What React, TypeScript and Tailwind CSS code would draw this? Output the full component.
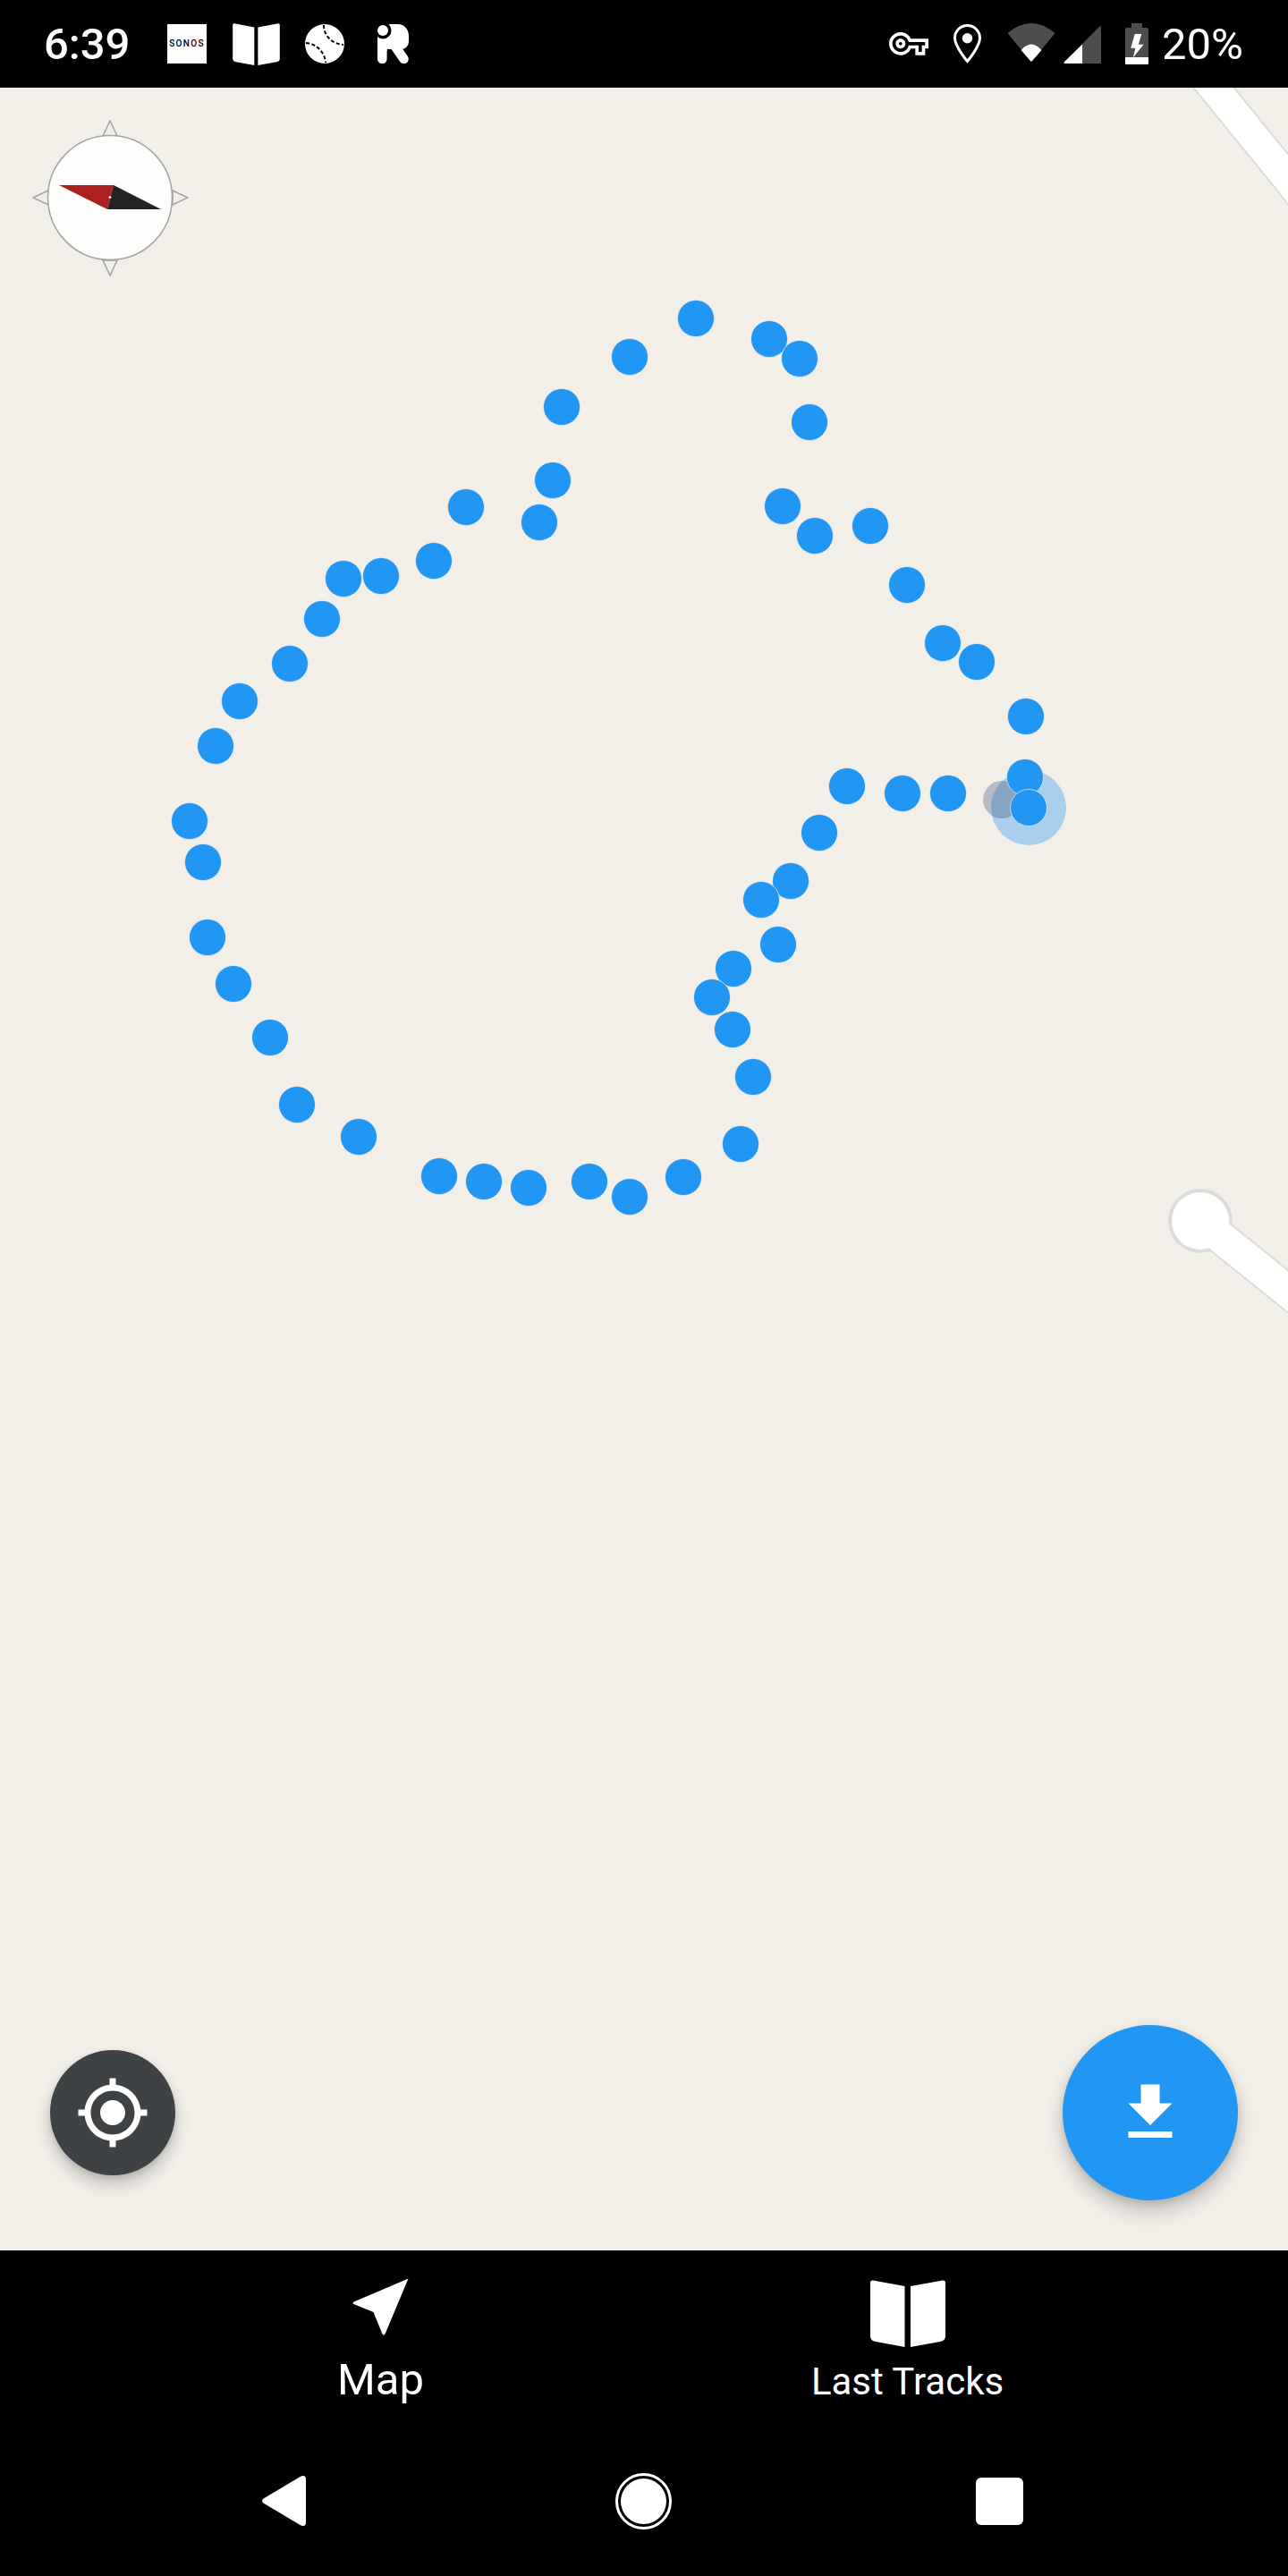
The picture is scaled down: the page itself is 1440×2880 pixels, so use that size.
const DOTS: [number, number][] = [
  [778, 356], [860, 379], [894, 401], [704, 399], [628, 455], [905, 472], [618, 537], [875, 566],
  [521, 567], [603, 584], [973, 588], [911, 599], [485, 627], [426, 644], [384, 647], [1014, 654],
  [360, 692], [1054, 719], [1092, 740], [324, 742], [268, 784], [1147, 801], [241, 834], [1146, 869],
  [947, 879], [1009, 887], [1060, 887], [1150, 903], [212, 918], [916, 931], [227, 964], [884, 985],
  [851, 1006], [232, 1048], [870, 1056], [820, 1083], [261, 1100], [796, 1115], [819, 1151], [302, 1160],
  [842, 1204], [332, 1235], [401, 1271], [828, 1279], [491, 1315], [764, 1316], [541, 1321], [659, 1321],
  [591, 1328], [704, 1338],
];

function BookIcon({ className }: { className: string }) {
  return (
    <svg viewBox="0 0 84 75" className={className} fill="#fff">
      <path d="M3 .5 38.500 7v68L6 69q-6-1-6-6V3q0-3 3-2.500Z" />
      <path d="M81 .5 45 7v68l33-6q6-1 6-6V3q0-3-3-2.500Z" />
    </svg>
  );
}

function StatusBar() {
  return (
    <div className="h-[98px] shrink-0 bg-black flex items-center pl-[49px] pr-[50px] text-white font-['Roboto',sans-serif]">
      <span className="w-[138px] text-[49px] leading-none font-medium">6:39</span>

      <div className="w-[44px] h-[44px] bg-white flex items-center justify-center">
        <span className="text-[10px] leading-none font-medium tracking-[1.3px] text-black">SONOS</span>
      </div>
      <BookIcon className="w-[53px] h-[47px] ml-[29px]" />
      {/* baseball */}
      <svg viewBox="0 0 44 44" className="w-[44px] h-[44px] ml-[28px]">
        <circle cx="22" cy="22" r="22" fill="#fff" />
        <path d="M21 1c0 12 9 21 22 22M1 21c12 1 21 10 22 22" fill="none" stroke="#000" strokeWidth="2" strokeDasharray="4 2.500" />
      </svg>
      {/* figure logo */}
      <svg viewBox="0 0 35 44" className="w-[35px] h-[44px] ml-[37px]">
        <path d="M3 0H23C30 0 35 6 35 13V19C35 24 32 27 28 28H10.600V30H0V3Q0 0 3 0Z" fill="#fff" />
        <path d="M18.500 23 29.500 39" stroke="#fff" strokeWidth="10.500" strokeLinecap="round" />
        <path d="M5.300 19V39" stroke="#fff" strokeWidth="10.600" strokeLinecap="round" />
        <circle cx="6" cy="7" r="9.500" fill="#000" />
        <circle cx="6" cy="7" r="6" fill="#fff" />
      </svg>

      <div className="ml-auto flex items-center">
        {/* vpn key */}
        <svg viewBox="0 5 24 14" className="w-[44px] h-[25.700px]" fill="#fff">
          <path d="M22 19h-6v-4h-2.680c-1.140 2.420-3.600 4-6.320 4-3.860 0-7-3.140-7-7s3.140-7 7-7c2.720 0 5.170 1.580 6.320 4H24v6h-2v4zm-4-2h2v-4h2v-2H11.940l-.230-.670C11.010 8.340 9.110 7 7 7c-2.760 0-5 2.240-5 5s2.240 5 5 5c2.110 0 4.010-1.340 4.710-3.330l.230-.670H18v4zM7 15c-1.650 0-3-1.350-3-3s1.350-3 3-3 3 1.350 3 3-1.350 3-3 3zm0-4c-.550 0-1 .450-1 1s.450 1 1 1 1-.450 1-1-.450-1-1-1z" />
        </svg>
        {/* location pin */}
        <svg viewBox="0 0 31 44" className="w-[31px] h-[44px] ml-[28px]">
          <path d="M15.500 1.500C8 1.500 1.500 7.500 1.500 15.500c0 9.500 14 26 14 26s14-16.500 14-26c0-8-6.500-14-14-14Z" fill="none" stroke="#fff" strokeWidth="3" />
          <circle cx="15.500" cy="15.700" r="5.700" fill="#fff" />
        </svg>
        {/* wifi */}
        <svg viewBox="0 0 54 43" className="w-[54px] h-[43px] ml-[29px] -mt-[3px]">
          <path d="M.5 11Q27-11 53.500 11L28 42q-1 1.400-2 0Z" fill="#4d4d4d" />
          <path d="M15.500 30Q27 17 38.500 30L28 42q-1 1.400-2 0Z" fill="#fff" />
        </svg>
        {/* signal */}
        <svg viewBox="0 0 42 42" className="w-[42px] h-[42px] ml-[9px] mt-[2px]">
          <path d="M40.500 .5q1.500-1 1.500 1V41q0 1-1 1H21V20Z" fill="#4d4d4d" />
          <path d="M21 20.500V42H2q-2.500 0-1-2Z" fill="#fff" />
        </svg>
        {/* battery charging */}
        <svg viewBox="0 0 26 46" className="w-[26px] h-[46px] ml-[27px]">
          <path d="M7 0h12v5h5q2 0 2 2v31H0V7q0-2 2-2h5Z" fill="#4d4d4d" />
          <path d="M0 38h26v7q0 1-1 1H1q-1 0-1-1Z" fill="#fff" />
          <path d="M10.700 12h7.600l-3.500 11.700h5.800L8.900 38.300l2.400-10.600H6.200Z" fill="#fff" />
        </svg>
        <span className="ml-[15px] text-[49px] leading-none">20%</span>
      </div>
    </div>
  );
}

function Compass() {
  return (
    <svg viewBox="0 0 175 175" className="absolute left-[36px] top-[36px] w-[175px] h-[175px]">
      <g fill="#f2efe9" stroke="#a3a3a3" strokeWidth="1.500">
        <path d="M87 1 79 18H95Z" />
        <path d="M87 174 79 157H95Z" />
        <path d="M1 87 18 79V95Z" />
        <path d="M174 87 157 79V95Z" />
      </g>
      <circle cx="87" cy="87" r="69.500" fill="#fdfdfb" stroke="#a3a3a3" strokeWidth="1.500" />
      <path d="M30 73H91L84 100Z" fill="#ae2120" />
      <path d="M91 73 144 100H84Z" fill="#232323" />
      <circle cx="87" cy="86.500" r="1.500" fill="#f2efe9" />
    </svg>
  );
}

function MapView() {
  const dots = [...DOTS].sort((a, b) => a[1] - b[1]);
  return (
    <div className="relative flex-1 bg-[#f2efe9] overflow-hidden">
      {/* map layer uses page coordinates */}
      <svg viewBox="0 98 1440 2418" className="absolute inset-0 w-full h-full">
        <g fill="none" strokeLinecap="round">
          <path d="M1340 78 1357 98 1440 200 1460 226" stroke="#dcdcd9" strokeWidth="37" />
          <path d="M1342 1365 1460 1460" stroke="#dcdcd9" strokeWidth="39" />
        </g>
        <circle cx="1342" cy="1365" r="36" fill="#dcdcd9" />
        <g fill="none" strokeLinecap="round">
          <path d="M1340 78 1357 98 1440 200 1460 226" stroke="#fff" strokeWidth="33" />
          <path d="M1342 1365 1460 1460" stroke="#fff" strokeWidth="35" />
        </g>
        <circle cx="1342" cy="1365" r="32" fill="#fff" />

        <circle cx="1150" cy="903" r="42" fill="#2196f3" fillOpacity="0.35" />
        <circle cx="1120" cy="894" r="21" fill="#3e4f6c" fillOpacity="0.32" />
        {dots.map(([x, y]) => (
          <circle key={`${x}-${y}`} cx={x} cy={y} r="20.500" fill="#2196f3" stroke="#f2efe9" strokeOpacity="0.7" strokeWidth="1" />
        ))}
      </svg>

      <Compass />

      {/* my location */}
      <button className="absolute left-[56px] bottom-[84px] w-[140px] h-[140px] rounded-full bg-[#3e4245] flex items-center justify-center shadow-[0_10px_18px_rgba(0,0,0,0.2),0_3px_6px_rgba(0,0,0,0.1)]">
        <svg viewBox="0 0 24 24" className="w-[84px] h-[84px]" fill="#fff">
          <path d="M12 8c-2.210 0-4 1.790-4 4s1.790 4 4 4 4-1.790 4-4-1.790-4-4-4zm8.940 3c-.460-4.170-3.770-7.480-7.940-7.940V1h-2v2.060C6.830 3.520 3.520 6.830 3.060 11H1v2h2.060c.460 4.170 3.770 7.480 7.940 7.940V23h2v-2.060c4.170-.460 7.480-3.770 7.940-7.940H23v-2h-2.060zM12 19c-3.870 0-7-3.130-7-7s3.130-7 7-7 7 3.130 7 7-3.130 7-7 7z" />
        </svg>
      </button>

      {/* download */}
      <button className="absolute left-[1188px] bottom-[56px] w-[196px] h-[196px] rounded-full bg-[#2196f3] flex items-center justify-center shadow-[0_12px_22px_rgba(0,0,0,0.2),0_4px_8px_rgba(0,0,0,0.1)]">
        <svg viewBox="0 0 24 24" className="w-[84px] h-[84px]" fill="#fff">
          <path d="M19 9h-4V3H9v6H5l7 7 7-7zM5 18v2h14v-2H5z" />
        </svg>
      </button>
    </div>
  );
}

function TabBar() {
  return (
    <div className="h-[196px] shrink-0 bg-black grid grid-cols-[589px_589px] justify-center text-white font-['Roboto',sans-serif]">
      <div className="flex flex-col items-center pt-[31px]">
        <svg viewBox="0 0 63 64" className="w-[63px] h-[64px]" fill="#fff">
          <path d="M62.500 .5 1.500 26.500q-2 1.500 0 2.500L23.500 38 33.500 62.500q1.500 2 3 0Z" />
        </svg>
        <span className="mt-[25px] text-[49px] leading-none">Map</span>
      </div>
      <div className="flex flex-col items-center pt-[33px]">
        <BookIcon className="w-[84px] h-[75px]" />
        <span className="mt-[18px] text-[42px] leading-none">Last Tracks</span>
      </div>
    </div>
  );
}

function NavBar() {
  return (
    <div className="h-[168px] shrink-0 bg-black flex items-center pl-[293px]">
      <svg viewBox="0 0 49 56" className="w-[49px] h-[56px]" fill="#fff">
        <path d="M1.500 25.500 43 .8Q49-1.500 49 4v48q0 5.500-6 3.200L1.500 30.500q-3-2.500 0-5Z" />
      </svg>
      <div className="ml-[346px] w-[63px] h-[63px] rounded-full border-[3px] border-white p-[3px]">
        <div className="w-full h-full rounded-full bg-white" />
      </div>
      <div className="ml-[340px] w-[53px] h-[53px] rounded-[6px] bg-white" />
    </div>
  );
}

export default function App() {
  return (
    <div className="w-[1440px] h-[2880px] flex flex-col overflow-hidden">
      <StatusBar />
      <MapView />
      <TabBar />
      <NavBar />
    </div>
  );
}
